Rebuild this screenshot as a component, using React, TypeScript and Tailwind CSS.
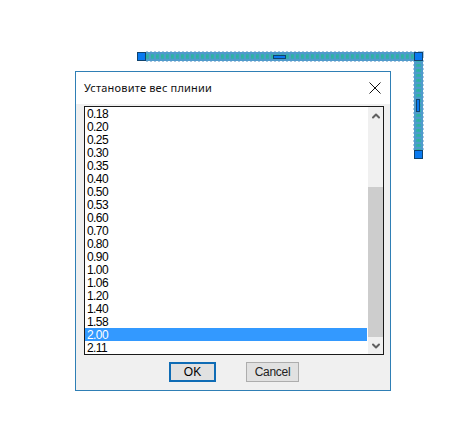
import { ChevronUp, ChevronDown } from 'lucide-react';

const weights = ['0.18', '0.20', '0.25', '0.30', '0.35', '0.40', '0.50', '0.53', '0.60', '0.70', '0.80', '0.90', '1.00', '1.06', '1.20', '1.40', '1.58', '2.00', '2.11'];

const Handle = ({ x, y, w, h }: { x: number; y: number; w: number; h: number }) => (
  <rect x={x + 0.5} y={y + 0.5} width={w - 1} height={h - 1} fill="#0a7af0" stroke="#10436e" />
);

const LINE = 'M146 56.5H418.5V150';

// the selected polyline in the drawing behind the dialog
const Polyline = () => (
  <svg className="absolute left-0 top-0" width="462" height="427">
    <path d={LINE} fill="none" stroke="#a9c8e2" strokeWidth="11" strokeDasharray="2 2" />
    <path d={LINE} fill="none" stroke="#4f9bcb" strokeWidth="9" />
    <path d={LINE} fill="none" stroke="#34aeb0" strokeWidth="5" strokeDasharray="3 2" />
    <path d={LINE} fill="none" stroke="#2fb39a" strokeWidth="2" strokeDasharray="2 3" />
    <Handle x={137} y={52} w={9} h={9} />
    <Handle x={414} y={52} w={9} h={9} />
    <Handle x={414} y={150} w={9} h={9} />
    <Handle x={273} y={55} w={13} h={4} />
    <Handle x={416} y={99} w={4} h={13} />
  </svg>
);

export default function App() {
  return (
    <div className="relative w-[462px] h-[427px] bg-white overflow-hidden font-['Liberation_Sans',sans-serif]">
      <Polyline />

      {/* DIALOG */}
      <div className="absolute left-[75px] top-[71px] w-[316px] h-[320px] flex flex-col bg-[#f0f0f0] border border-[#2f7fb5]">
        <div className="h-[32px] shrink-0 bg-white flex items-center justify-between pl-[8px] pr-[9px]">
          <span className="text-[11px] font-['Noto_Sans',sans-serif] text-[#111] tracking-[0.2px]">Установите вес плинии</span>
          <svg width="12" height="12" viewBox="0 0 12 12" className="mt-[-1px]">
            <path d="M0.5 0.5L11.5 11.5M11.5 0.5L0.5 11.5" stroke="#111" strokeWidth="1" fill="none" />
          </svg>
        </div>

        <div className="ml-[8px] mr-[6px] mt-[2px] h-[249px] flex bg-white border border-[#1a1a1a]">
          <ul className="flex-1 min-w-0 overflow-hidden pr-[1px]">
            {weights.map((w) => (
              <li
                key={w}
                className={`h-[13px] pl-[2px] text-[12px] leading-[15px] tracking-[-0.6px] ${w === '2.00' ? 'bg-[#3399ff] text-white' : 'text-black'}`}
              >
                {w}
              </li>
            ))}
          </ul>
          <div className="w-[15px] shrink-0 flex flex-col bg-[#f0f0f0]">
            <div className="h-[17px] flex items-center justify-center">
              <ChevronUp size={12} strokeWidth={4} className="text-[#606060]" />
            </div>
            <div className="flex-1 flex flex-col justify-end">
              <div className="h-[150px] bg-[#cdcdcd]" />
            </div>
            <div className="h-[17px] flex items-center justify-center">
              <ChevronDown size={12} strokeWidth={4} className="text-[#606060]" />
            </div>
          </div>
        </div>

        <div className="flex justify-center gap-[30px] mt-[7px] pl-[2px]">
          <button className="w-[47px] h-[20px] bg-[#e1e1e1] border-2 border-[#0f6cb5] text-[12px] leading-none text-black">OK</button>
          <button className="w-[53px] h-[20px] bg-[#e1e1e1] border border-[#adadad] text-[12px] tracking-[-0.3px] leading-none text-[#222]">Cancel</button>
        </div>
      </div>
    </div>
  );
}
